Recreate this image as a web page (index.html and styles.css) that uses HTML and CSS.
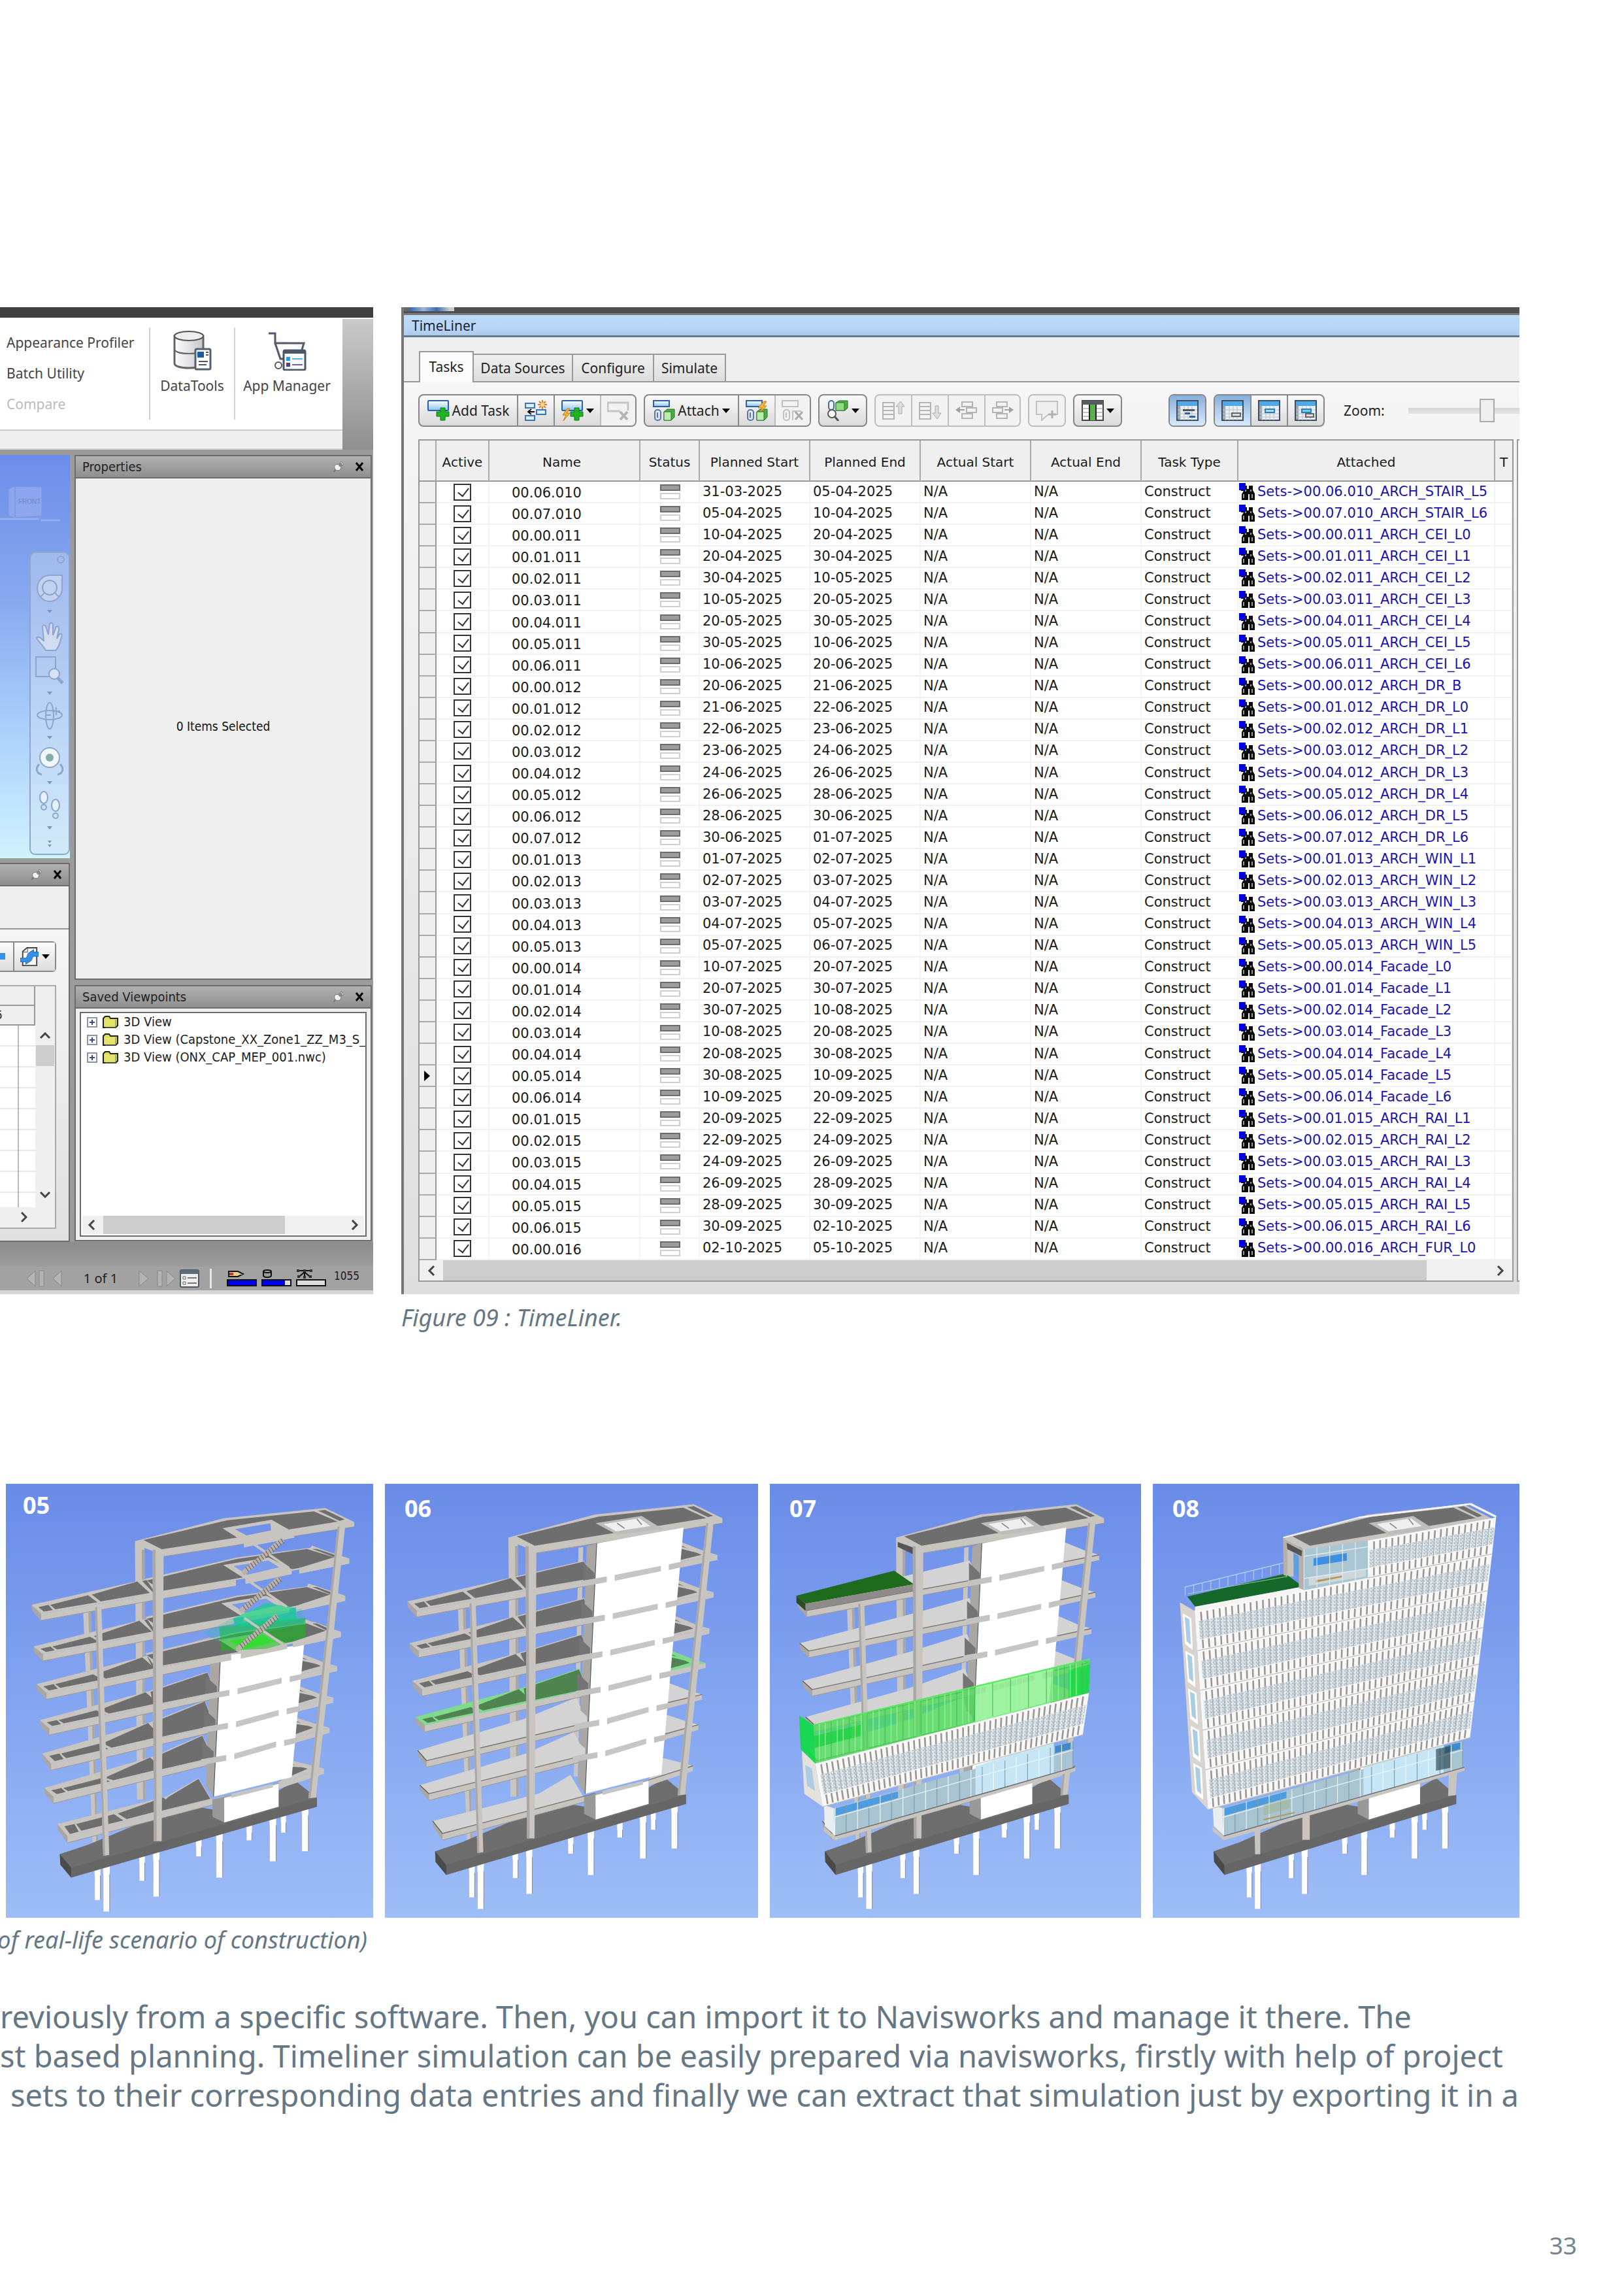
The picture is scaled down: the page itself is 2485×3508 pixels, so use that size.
FILE: index.html
```html
<!DOCTYPE html>
<html lang="en">
<head>
<meta charset="utf-8">
<title>TimeLiner</title>
<link rel="stylesheet" href="styles.css">
</head>
<body>
<svg class="defs" aria-hidden="true">
  <defs>
    <linearGradient id="sky" x1="0" y1="0" x2="0" y2="1"><stop offset="0" stop-color="#698be8"/><stop offset="1" stop-color="#a0c0f8"/></linearGradient>
    <linearGradient id="box" x1="0" y1="0" x2="0" y2="1"><stop offset="0" stop-color="#ffffff"/><stop offset="1" stop-color="#8ec2ee"/></linearGradient>
    <linearGradient id="drum" x1="0" y1="0" x2="1" y2="0"><stop offset="0" stop-color="#ffffff"/><stop offset="1" stop-color="#c4c6cc"/></linearGradient>
    <pattern id="speckle" width="14" height="12" patternUnits="userSpaceOnUse"><rect width="14" height="12" fill="#d6dfe4"/><path d="M1 1h3v3H1zM7 5h2v4H7zM11 0h2v3h-2zM3 8h3v2H3zM10 9h3v2h-3z" fill="#8296a2"/><path d="M5 2h3v2H5zM0 5h2v3H0zM11 5h2v3h-2z" fill="#fff"/></pattern>
    <symbol id="pin" viewBox="0 0 18 18"><path d="M1 17l6-6" stroke="#777" stroke-width="2"/><path d="M4 6a5 5 0 0 0 8 7l1-4 4-4-4-4-3 4z" fill="#f2f2f2" stroke="#777"/><circle cx="12" cy="6" r="3" fill="#888"/></symbol>
    <symbol id="close" viewBox="0 0 14 14"><path d="M2 1l10 12M12 1L2 13" stroke="#000" stroke-width="3"/></symbol>
    <symbol id="folder" viewBox="0 0 24 20"><path d="M1 18V4l3-3h6l2 3h11v11l-3 3z" fill="#dede5c" stroke="#222" stroke-width="2"/><path d="M3 6h17v10H3z" fill="#e3e46a"/><path d="M20 6v12H4" fill="none" stroke="#777" stroke-width="1"/></symbol>
    <symbol id="binoc" viewBox="0 0 24 26"><path d="M7 4h5v5h3V4h6v7l3 5v10h-8v-9h-2v9H4v-9l3-5z" fill="#0a0a0a"/><path d="M7 17v6M20 17v6M10 10v3M18 10v3" stroke="#999" stroke-width="2"/><path d="M0 0h10v11H0z" fill="#0000e8"/><path d="M3 11h5" stroke="#000" stroke-width="2"/></symbol>
    <symbol id="i-add" viewBox="0 0 34 32"><rect x="1" y="1" width="31" height="15" rx="1" fill="url(#box)" stroke="#2b5fa8" stroke-width="2"/><path d="M20 12h7v6h6v7h-6v6h-7v-6h-6v-7h6z" fill="#21b321" stroke="#0b7a12"/></symbol>
    <symbol id="i-insert" viewBox="0 0 34 32"><g fill="#d9f0fb" stroke="#3575b8" stroke-width="2"><rect x="1" y="5" width="14" height="7"/><rect x="18" y="15" width="14" height="7"/><rect x="1" y="24" width="14" height="7"/></g><path d="M27 0v14M20 7h14M22 2l10 10M32 2L22 12" stroke="#e37a28" stroke-width="2"/><circle cx="27" cy="7" r="3" fill="#f7dc8c"/><path d="M15 18H6M10 14l-5 4 5 4" stroke="#111" stroke-width="2" fill="none"/></symbol>
    <symbol id="i-auto" viewBox="0 0 34 32"><use href="#i-add"/><path d="M9 13L2 23h5l-4 9 10-12H8l5-7z" fill="#f8b533" stroke="#c57a16"/></symbol>
    <symbol id="i-del" viewBox="0 0 34 32"><path d="M20 17H1V4h31v12" fill="none" stroke="#c4c4c4" stroke-width="3"/><path d="M20 18l11 12M31 18L20 30" stroke="#b4b4b4" stroke-width="4"/></symbol>
    <symbol id="i-attach" viewBox="0 0 34 32"><rect x="1" y="1" width="24" height="9" fill="url(#box)" stroke="#2b5fa8" stroke-width="2"/><rect x="3" y="15" width="9" height="16" rx="4" fill="none" stroke="#5577aa" stroke-width="2"/><path d="M7 19v8" stroke="#5577aa" stroke-width="2"/><path d="M17 18l5-4h11v12l-5 5H17z" fill="#4cae3c" stroke="#28702a"/><path d="M17 18h11v13H17z" fill="#b8eeb0" stroke="#28702a"/></symbol>
    <symbol id="i-attachauto" viewBox="0 0 34 32"><use href="#i-attach"/><path d="M28 2l-9 10h6l-3 7 10-10h-5l5-7z" fill="#f8b533" stroke="#c57a16"/></symbol>
    <symbol id="i-detach" viewBox="0 0 34 32"><g fill="none" stroke="#c0c0c0" stroke-width="2"><rect x="1" y="1" width="24" height="9"/><rect x="3" y="15" width="9" height="16" rx="4"/><path d="M17 31V17h13M7 19v8"/></g><path d="M21 18l11 12M32 18L21 30" stroke="#aaa" stroke-width="3"/></symbol>
    <symbol id="i-find" viewBox="0 0 34 32"><rect x="3" y="1" width="8" height="14" rx="4" fill="none" stroke="#4a6a9a" stroke-width="2"/><path d="M14 4l5-3h13v11l-4 4H14z" fill="#4cae3c" stroke="#28702a"/><path d="M14 4h13v12H14z" fill="#8fdc80" stroke="#28702a"/><circle cx="8" cy="21" r="6" fill="#fff" stroke="#555" stroke-width="2"/><path d="M12 25l6 7" stroke="#555" stroke-width="3"/></symbol>
    <symbol id="i-up" viewBox="0 0 34 32"><path d="M1 4h17v25H1zM1 10h17M1 16h17M1 22h17" fill="none" stroke="#b4b4b4" stroke-width="2"/><path d="M25 21V10h-4l7-8 6 8h-4v11z" fill="#ddd" stroke="#aaa"/></symbol>
    <symbol id="i-down" viewBox="0 0 34 32"><path d="M1 4h17v25H1zM1 10h17M1 16h17M1 22h17" fill="none" stroke="#b4b4b4" stroke-width="2"/><path d="M25 9v11h-4l7 9 6-9h-4V9z" fill="#ddd" stroke="#aaa"/></symbol>
    <symbol id="i-out" viewBox="0 0 34 32"><g fill="none" stroke="#b4b4b4" stroke-width="2"><path d="M10 3h16v7H10zM17 12h15v7H17zM10 21h16v7H10z"/></g><path d="M0 15l7-5v10z" fill="#a2a2a2"/><path d="M6 15h8" stroke="#a2a2a2" stroke-width="2"/></symbol>
    <symbol id="i-in" viewBox="0 0 34 32"><g fill="none" stroke="#b4b4b4" stroke-width="2"><path d="M8 3h16v7H8zM2 12h15v7H2zM8 21h16v7H8z"/></g><path d="M34 15l-7-5v10z" fill="#a2a2a2"/><path d="M20 15h8" stroke="#a2a2a2" stroke-width="2"/></symbol>
    <symbol id="i-note" viewBox="0 0 34 32"><path d="M1 2h32v20H19L9 31v-9H1z" fill="#efefef" stroke="#c2c2c2" stroke-width="2"/><path d="M25 16v12M19 22h12" stroke="#b0b0b0" stroke-width="3"/></symbol>
    <symbol id="i-cols" viewBox="0 0 34 32"><rect x="1" y="1" width="32" height="30" fill="#fff" stroke="#444" stroke-width="2"/><path d="M1 1h32v6H1z" fill="#555b66"/><path d="M12 7h10v24H12z" fill="#57b544"/><path d="M1 13h32M1 19h32M1 25h32" stroke="#888"/><path d="M12 7v24M22 7v24" stroke="#222" stroke-width="2"/></symbol>
    <symbol id="i-view" viewBox="0 0 34 32"><rect x="1" y="1" width="32" height="30" fill="#e8eef3" stroke="#3e4d60" stroke-width="2"/><path d="M2 2h30v7H2z" fill="#4fa9e6"/><path d="M2 9h4v21H2z" fill="#9aa4ae"/><path d="M6 9v22M12 9v22M18 9v22M24 9v22M2 15h30M2 21h30M2 26h30" stroke="#b9c2ca"/></symbol>
    <symbol id="i-sync" viewBox="0 0 30 32"><path d="M4 30V7l7-6h16v29z" fill="#f7f7f7" stroke="#444" stroke-width="2"/><path d="M12 1v7H4" fill="none" stroke="#444"/><path d="M30 8h-8V4l-9 6-3 8H0v6h9v4l9-6 3-7h9z" fill="#3592e8" stroke="#1763b4"/></symbol>
  </defs>
</svg>
<main class="page">
  <section class="shots">
    <div class="app">
      <div class="app-top"></div>
      <div class="ribbon-row">
        <div class="ribbon">
          <div class="ribbon-tools">
            <div class="ribbon-list">
              <button>Appearance Profiler</button>
              <button>Batch Utility</button>
              <button disabled>Compare</button>
            </div>
            <button class="big-tool data">
              <svg width="60" height="62" viewBox="0 0 60 62"><path d="M3 9v42c0 4 9 7 22 7s22-3 22-7V9z" fill="url(#drum)" stroke="#666" stroke-width="3"/><ellipse cx="25" cy="9" rx="22" ry="7" fill="#eee" stroke="#555" stroke-width="2"/><path d="M3 30c4 8 40 8 44 0" fill="none" stroke="#666" stroke-width="2"/><rect x="35" y="29" width="23" height="31" rx="2" fill="#fff" stroke="#556070" stroke-width="3"/><path d="M38 33h10v9H38z" fill="#1c5aa8"/><path d="M51 34h4M51 38h4M40 48h14M40 53h12" stroke="#555" stroke-width="2"/></svg>
              DataTools
            </button>
            <button class="big-tool">
              <svg width="60" height="62" viewBox="0 0 60 62"><path d="M2 5h10v15h44l-3 10M12 20l8 24h8" fill="#f6f6f8" stroke="#55586a" stroke-width="3"/><circle cx="17" cy="54" r="5" fill="#fff" stroke="#555" stroke-width="2"/><rect x="25" y="31" width="33" height="30" rx="2" fill="#f7fafc" stroke="#4c566b" stroke-width="3"/><path d="M25 30h33v6H25z" fill="#4c566b"/><path d="M29 41h6v6h-6z" fill="#2a9be0"/><path d="M29 50h6v6h-6z" fill="#5a3d78"/><path d="M38 44h16" stroke="#4fb0e8" stroke-width="2"/><path d="M38 53h16" stroke="#7a5fa0" stroke-width="2"/></svg>
              App Manager
            </button>
          </div>
          <div class="ribbon-foot"></div>
        </div>
        <div class="ribbon-side"></div>
      </div>
      <div class="work">
        <div class="work-left">
          <div class="viewport">
            <svg class="viewport-art" viewBox="0 0 107 617" preserveAspectRatio="none">
              <g opacity=".6"><path d="M13 52l10-4 41 1v44l-42 3-9-3z" fill="#9bb2f0" stroke="#8098dc"/><path d="M23 48v47" stroke="#7088c8"/><path d="M0 98h60M62 100h30" stroke="#a8bdf2" stroke-width="3"/></g>
              <g fill="none" stroke="#8da4cc" stroke-width="2">
                <rect x="46" y="149" width="60" height="462" rx="8" fill="#d5e2f0" fill-opacity=".4"/>
                <circle cx="93" cy="160" r="5"/>
                <path d="M76 184h19v18a19 20 0 1 1-19-18z" fill="#c3d2f0"/><circle cx="76" cy="203" r="11"/><path d="M68 211l-6 6M84 211l6 6"/>
                <path d="M70 299c-4-8-12-14-14-19 3-4 9 2 11 5l-2-23c3-4 5 0 6 3l3 10 2-17c3-3 5 0 5 3v15l5-13c3-2 5 1 4 4l-3 14 4-7c4-2 4 2 3 5-3 8-3 15-9 20z" fill="#d0dcf0"/>
                <path d="M55 309h30v30H55z"/><circle cx="83" cy="335" r="8" fill="#d8e4f4"/><path d="M88 341l8 8" stroke-width="5"/>
                <ellipse cx="76" cy="399" rx="6" ry="20"/><ellipse cx="76" cy="398" rx="19" ry="7"/><path d="M86 386v12M80 392h12M70 398h8"/>
                <path d="M60 473c-6 6-5 14 4 16M92 473c6 6 5 14-4 16" stroke-width="3"/><circle cx="76" cy="463" r="15" fill="#eef6f8"/><circle cx="76" cy="463" r="6" fill="#88aaa8" stroke="none"/>
                <ellipse cx="67" cy="524" rx="6" ry="9" fill="#e4f2fa"/><circle cx="67" cy="539" r="4"/><ellipse cx="85" cy="536" rx="6" ry="9" fill="#e4f2fa"/><circle cx="85" cy="552" r="4"/>
              </g>
              <path d="M72 237h8l-4 5zM72 362h8l-4 5zM72 430h8l-4 5zM72 499h8l-4 5zM72 568h8l-4 5zM73 590h6l-3 4zM73 596h6l-3 4z" fill="#7f96bc"/>
              <text x="28" y="75" font-size="10" class="cube">FRONT</text>
            </svg>
          </div>
          <div class="dock">
            <div class="panel-head"><svg width="18" height="18"><use href="#pin"/></svg><svg width="14" height="14"><use href="#close"/></svg></div>
            <div class="dock-band"></div>
            <div class="dock-body">
              <div class="sync-group"><button class="cutoff" aria-label="Import"></button><button aria-label="Synchronise"><svg width="28" height="30"><use href="#i-sync"/></svg><i class="caret"></i></button></div>
              <div class="gantt">
                <div class="gantt-main"><div class="gantt-h1"></div><div class="gantt-h2">5</div><div class="gantt-rows"></div></div>
                <div class="vscroll"><svg width="16" height="10" viewBox="0 0 16 10"><path d="M1 9l7-7 7 7" fill="none" stroke="#444" stroke-width="3"/></svg><div class="vthumb"></div><svg class="down" width="16" height="10" viewBox="0 0 16 10"><path d="M1 1l7 7 7-7" fill="none" stroke="#444" stroke-width="3"/></svg></div>
                <div class="gantt-foot"><svg width="10" height="16" viewBox="0 0 10 16"><path d="M1 1l7 7-7 7" fill="none" stroke="#444" stroke-width="3"/></svg></div>
              </div>
            </div>
          </div>
        </div>
        <div class="work-right">
          <section class="panel props">
            <header class="panel-head"><h2>Properties</h2><svg width="18" height="18"><use href="#pin"/></svg><svg width="14" height="14"><use href="#close"/></svg></header>
            <p>0 Items Selected</p>
          </section>
          <section class="panel saved">
            <header class="panel-head"><h2>Saved Viewpoints</h2><svg width="18" height="18"><use href="#pin"/></svg><svg width="14" height="14"><use href="#close"/></svg></header>
            <div class="tree-box">
              <ul class="tree">
                <li><i class="plus"></i><svg width="24" height="20"><use href="#folder"/></svg>3D View</li>
                <li><i class="plus"></i><svg width="24" height="20"><use href="#folder"/></svg>3D View (Capstone_XX_Zone1_ZZ_M3_S_R</li>
                <li><i class="plus"></i><svg width="24" height="20"><use href="#folder"/></svg>3D View (ONX_CAP_MEP_001.nwc)</li>
              </ul>
              <div class="hscroll small"><svg width="12" height="16" viewBox="0 0 12 16"><path d="M10 1L3 8l7 7" fill="none" stroke="#444" stroke-width="3"/></svg><div class="hthumb"></div><svg width="12" height="16" viewBox="0 0 12 16"><path d="M2 1l7 7-7 7" fill="none" stroke="#444" stroke-width="3"/></svg></div>
            </div>
          </section>
        </div>
      </div>
      <footer class="status">
        <svg class="sheet-nav" width="56" height="26" viewBox="0 0 56 26"><path d="M14 1v24L1 13zM20 1h7v24h-7zM54 1v24L41 13z" fill="#b4b4b4" stroke="#868686"/></svg>
        <span class="sheet">1 of 1</span>
        <svg width="56" height="26" viewBox="0 0 56 26"><path d="M1 1v24l14-12zM29 1h7v24h-7zM43 1v24l13-12z" fill="#b4b4b4" stroke="#868686"/></svg>
        <svg class="sheet-list" width="30" height="28" viewBox="0 0 30 28"><rect x="1" y="1" width="28" height="26" rx="2" fill="#eee" stroke="#4f5963" stroke-width="2"/><path d="M1 1h28v6H1z" fill="#5b6a78"/><path d="M5 11h4v4H5zM5 19h4v4H5z" fill="none" stroke="#666"/><path d="M12 13h14M12 21h14" stroke="#777" stroke-width="2"/></svg>
        <i class="bar"></i>
        <svg class="meters" width="152" height="28" viewBox="0 0 152 28"><g stroke="#111" stroke-width="2"><rect x="1" y="16" width="44" height="9" fill="#0000f0"/><rect x="54" y="16" width="44" height="9" fill="#ddd"/><rect x="107" y="16" width="44" height="9" fill="#ddd"/></g><path d="M55 17h34v7H55z" fill="#0000f0"/><path d="M3 3h14l8 4-8 4H3z" fill="#e8d088" stroke="#111" stroke-width="2"/><path d="M4 5h6v4H4z" fill="#c33"/><path d="M56 3v7c2 3 10 3 12 0V3" fill="#999" stroke="#111" stroke-width="2"/><ellipse cx="62" cy="3" rx="6" ry="2" fill="#aaa" stroke="#111" stroke-width="2"/><path d="M109 2h20M119 2v9M119 4l-8 7M119 4l8 7" stroke="#111" stroke-width="2"/><path d="M107 0h4v4h-4zM117 0h4v4h-4zM127 0h4v4h-4zM108 9h4v4h-4zM117 10h4v4h-4zM126 9h4v4h-4z" fill="#333"/></svg>
        <span class="mem">1055</span>
      </footer>
      <div class="app-edge"></div>
    </div>

    <figure class="timeliner-fig">
      <div class="tl">
        <div class="tl-dark"><i></i></div>
        <h2 class="tl-title">TimeLiner</h2>
        <div class="tabs"><button class="on">Tasks</button><button>Data Sources</button><button>Configure</button><button>Simulate</button></div>
        <div class="tl-body">
          <div class="toolbar">
            <div class="group"><button class="w150"><svg width="34" height="32"><use href="#i-add"/></svg>Add Task</button><button aria-label="Insert"><svg width="34" height="32"><use href="#i-insert"/></svg></button><button class="w74" aria-label="Auto-add"><svg width="34" height="32"><use href="#i-auto"/></svg><i class="caret"></i></button><button class="off" aria-label="Delete"><svg width="34" height="32"><use href="#i-del"/></svg></button></div>
            <div class="group"><button class="w143"><svg width="34" height="32"><use href="#i-attach"/></svg>Attach<i class="caret"></i></button><button aria-label="Auto-attach"><svg width="34" height="32"><use href="#i-attachauto"/></svg></button><button class="off" aria-label="Clear attachment"><svg width="34" height="32"><use href="#i-detach"/></svg></button></div>
            <div class="group"><button class="w74" aria-label="Find items"><svg width="34" height="32"><use href="#i-find"/></svg><i class="caret"></i></button></div>
            <div class="group"><button class="off" aria-label="Move up"><svg width="34" height="32"><use href="#i-up"/></svg></button><button class="off" aria-label="Move down"><svg width="34" height="32"><use href="#i-down"/></svg></button><button class="off" aria-label="Outdent"><svg width="34" height="32"><use href="#i-out"/></svg></button><button class="off" aria-label="Indent"><svg width="34" height="32"><use href="#i-in"/></svg></button></div>
            <div class="group"><button class="off" aria-label="Add comment"><svg width="34" height="32"><use href="#i-note"/></svg></button></div>
            <div class="group"><button class="w74" aria-label="Columns"><svg width="34" height="32"><use href="#i-cols"/></svg><i class="caret"></i></button></div>
            <div class="group views"><button class="lit" aria-label="Gantt chart"><svg width="34" height="32" viewBox="0 0 34 32"><use href="#i-view"/><path d="M10 14h18v3H10z" fill="#555"/><path d="M13 19h8v3h-8zM20 24h9v3h-9z" fill="#2a62a8"/></svg></button></div>
            <div class="group"><button class="lit" aria-label="Planned dates"><svg width="34" height="32" viewBox="0 0 34 32"><use href="#i-view"/><path d="M16 20h13v5H16z" fill="#ddd" stroke="#666" stroke-width="2"/></svg></button><button aria-label="Actual dates"><svg width="34" height="32" viewBox="0 0 34 32"><use href="#i-view"/><path d="M11 14h14v5H11z" fill="#a4dcf4" stroke="#2f7db6" stroke-width="2"/></svg></button><button aria-label="Planned versus actual"><svg width="34" height="32" viewBox="0 0 34 32"><use href="#i-view"/><path d="M11 14h14v5H11z" fill="#7ac8f0" stroke="#2f7db6" stroke-width="2"/><path d="M17 21h12v5H17z" fill="#ddd" stroke="#666" stroke-width="2"/></svg></button></div>
            <label for="zoom">Zoom:</label><input id="zoom" type="range" min="0" max="100" value="74">
          </div>
          <div class="grid-row">
            <div class="grid-box">
              <table>
                <colgroup><col class="c-sel"><col class="c-act"><col class="c-name"><col class="c-stat"><col class="c-date"><col class="c-date"><col class="c-date"><col class="c-date"><col class="c-type"><col class="c-att"><col class="c-sel"></colgroup>
                <thead><tr><th></th><th>Active</th><th class="h-name">Name</th><th>Status</th><th>Planned Start</th><th>Planned End</th><th>Actual Start</th><th>Actual End</th><th>Task Type</th><th>Attached</th><th>T</th></tr></thead>
                <tbody id="tasks"></tbody>
              </table>
              <div class="hscroll"><svg width="12" height="16" viewBox="0 0 12 16"><path d="M10 1L3 8l7 7" fill="none" stroke="#444" stroke-width="3"/></svg><div class="hthumb"></div><svg width="12" height="16" viewBox="0 0 12 16"><path d="M2 1l7 7-7 7" fill="none" stroke="#444" stroke-width="3"/></svg></div>
            </div>
            <div class="next-pane"></div>
          </div>
        </div>
      </div>
      <figcaption>Figure 09 : TimeLiner.</figcaption>
    </figure>
  </section>

  <section class="stages">
    <figure class="stage first"><svg id="s5" viewBox="6 10 1457 1512" preserveAspectRatio="none"></svg><b>05</b></figure>
    <figure class="stage"><svg id="s6" viewBox="16 23 1517 1508" preserveAspectRatio="none"></svg><b>06</b></figure>
    <figure class="stage"><svg id="s7" viewBox="-10 23 1553 1508" preserveAspectRatio="none"></svg><b>07</b></figure>
    <figure class="stage"><svg id="s8" viewBox="-36 23 1542 1508" preserveAspectRatio="none"></svg><b>08</b></figure>
  </section>
  <div class="stage-caption"><span>of real-life scenario of construction)</span></div>

  <div class="copy">
    <p>reviously from a specific software. Then, you can import it to Navisworks and manage it there. The</p>
    <p>st based planning. Timeliner simulation can be easily prepared via navisworks, firstly with help of project</p>
    <p class="inset">sets to their corresponding data entries and finally we can extract that simulation just by exporting it in a</p>
  </div>
  <div class="folio">33</div>
</main>
<script src="script.js"></script>
</body>
</html>
```

FILE: styles.css
```css
* { box-sizing: border-box; }
body { margin: 0; background: #fff; overflow-x: hidden; font-family: "Noto Sans", sans-serif; }
button { font: inherit; color: inherit; background: none; border: 0; padding: 0; margin: 0; }
h2, p, ul, figure { margin: 0; padding: 0; font-weight: 400; }
svg { display: block; flex: none; }
i { display: block; flex: none; }
.defs { position: absolute; width: 0; height: 0; }
.page { padding-top: 470px; overflow: hidden; }
.shots { display: grid; grid-template-columns: 571fr 1711fr; gap: 43px; padding-right: 160px; }

/* Navisworks window */
.app { height: 1510px; display: flex; flex-direction: column; background: #9b9b99; overflow: hidden; min-width: 0; color: #1c1c1c; }
.app-top { height: 16px; background: #404040; }
.ribbon-row { display: flex; height: 202px; background: #fff; }
.ribbon { flex: 1; display: flex; flex-direction: column; }
.ribbon-side { width: 48px; margin-top: 2px; background: linear-gradient(#cacaca, #8f8f8f); }
.ribbon-tools { display: flex; flex: 1; padding: 15px 0; font-size: 21px; color: #444; }
.ribbon-list { width: 230px; flex: none; display: flex; flex-direction: column; align-items: flex-start; padding: 0 0 0 10px; border-right: 2px solid #d0d0d6; }
.ribbon-list button { line-height: 47px; height: 47px; white-space: nowrap; }
.ribbon-list button:disabled { color: #bbb; }
.big-tool { width: 130px; display: flex; flex-direction: column; align-items: center; gap: 8px; padding-top: 4px; white-space: nowrap; line-height: 30px; border-right: 2px solid #d0d0d6; }
.big-tool:last-child { width: 164px; border: 0; padding-right: 6px; }
.ribbon-foot { height: 33px; background: #efefef; border-top: 2px solid #ccc; border-bottom: 2px solid #d6d6d6; }
.work { display: flex; gap: 7px; padding: 8px 2px 0 0; height: 1212px; }
.work-left { width: 107px; display: flex; flex-direction: column; gap: 7px; }
.work-right { flex: 1; display: flex; flex-direction: column; gap: 8px; min-width: 0; }
.viewport { height: 617px; background: linear-gradient(#6b8de9, #87a8ee 35%, #a9ccfb 65%, #d0f2fe); }
.viewport-art { width: 100%; height: 100%; }
.cube { fill: #7488bb; font-family: "Liberation Sans", sans-serif; }
.panel { border: 2px solid #6c6c6c; background: #efefef; display: flex; flex-direction: column; font-family: "DejaVu Sans Condensed", "DejaVu Sans", sans-serif; }
.panel-head { height: 34px; flex: none; display: flex; align-items: center; gap: 16px; justify-content: flex-end; padding: 0 10px; background: linear-gradient(#b1b1b1, #8f8f8f); border-bottom: 2px solid #6c6c6c; }
.panel-head h2 { flex: 1; font-size: 20px; color: #222; line-height: 30px; }
.props { height: 803px; }
.props p { margin: auto; font-size: 19px; padding-bottom: 8px; color: #111; }
.saved { height: 392px; }
.tree-box { flex: 1; margin: 5px 6px; border: 2px solid #6a6a6a; background: #fff; display: flex; flex-direction: column; overflow: hidden; min-width: 0; }
.tree { flex: 1; list-style: none; font-size: 20px; line-height: 27px; padding: 0 0 0 9px; white-space: nowrap; }
.tree li { display: flex; align-items: center; gap: 8px; height: 27px; }
.plus { width: 16px; height: 16px; border: 2px solid #8a93a8; background: linear-gradient(#3a4a80, #3a4a80) center / 8px 2px no-repeat, linear-gradient(#3a4a80, #3a4a80) center / 2px 8px no-repeat; }
.hscroll { display: flex; align-items: center; gap: 12px; height: 31px; background: #f0f0f0; padding: 0 12px; }
.hscroll .hthumb { align-self: stretch; background: #ccc; width: 1505px; margin-right: auto; }
.hscroll.small { margin: 0 2px 2px; height: 28px; padding: 0 8px; }
.hscroll.small .hthumb { width: 278px; }
.dock { height: 580px; background: #f3f3f3; border: 2px solid #6c6c6c; border-left: 0; display: flex; flex-direction: column; }
.dock-band { height: 66px; background: #efefef; border-bottom: 2px solid #999; flex: none; }
.dock-body { flex: 1; padding: 18px 19px 0 0; background: linear-gradient(#f6f6f6, #e0e0e0); }
.sync-group { display: flex; height: 47px; border: 2px solid #888; border-left: 0; border-radius: 0 6px 6px 0; }
.sync-group button { flex: 1; display: flex; align-items: center; justify-content: center; gap: 5px; border-left: 2px solid #888; background: linear-gradient(#fdfdfd, #dcdcdc); }
.sync-group .cutoff { flex: none; width: 20px; border: 0; background: linear-gradient(#3592e8, #3592e8) 0 16px / 8px 10px no-repeat, linear-gradient(#fdfdfd, #dcdcdc); }
.caret { width: 0; height: 0; border: 6px solid transparent; border-top: 7px solid #000; border-bottom: 0; }
.gantt { margin-top: 20px; height: 373px; display: grid; grid-template-columns: 1fr 30px; grid-template-rows: 1fr 31px; border: 2px solid #aaa; border-left: 0; background: #efefef; }
.gantt-main { background: #fff; display: flex; flex-direction: column; }
.gantt-h1, .gantt-h2 { height: 30px; background: #efefef; border-bottom: 2px solid #999; border-right: 2px solid #999; }
.gantt-h2 { font: 17px/28px "DejaVu Sans Condensed", sans-serif; text-indent: -6px; overflow: hidden; }
.gantt-rows { flex: 1; background: linear-gradient(90deg, transparent 27px, #bbb 27px, #bbb 29px, transparent 29px), repeating-linear-gradient(#fff 0 30px, #e6e6e6 30px 32px); }
.vscroll { display: flex; flex-direction: column; align-items: center; padding: 70px 0 14px; }
.vthumb { width: 28px; height: 32px; margin-top: 10px; background: #ccc; }
.down { margin-top: auto; }
.gantt-foot { grid-column: 1 / 3; padding: 7px 0 0 32px; }
.status { height: 74px; display: flex; align-items: center; padding: 38px 0 0 40px; background: linear-gradient(#8c8c8c, #9d9d9d 38px, #a2a2a2 38px); flex: none; }
.sheet { font-size: 20px; width: 116px; text-align: center; line-height: 28px; color: #222; }
.sheet-list { margin-left: 7px; }
.bar { width: 3px; height: 30px; background: #e6e6e6; margin: 0 23px 0 16px; }
.mem { font: 17px/26px "DejaVu Sans Condensed", sans-serif; margin: -8px 0 0 12px; }
.app-edge { flex: 1; background: #d6d6d6; }

/* TimeLiner window */
.timeliner-fig { min-width: 0; }
.tl { height: 1510px; display: flex; flex-direction: column; background: #efefef; border-left: 4px solid #777; overflow: hidden; }
.tl-dark { height: 12px; flex: none; background: #4f5052; border-bottom: 3px solid #77797c; }
.tl-dark i { width: 77px; height: 6px; background: linear-gradient(90deg, #666 8px, #3c6cb4 10px, #9db4d8 30px, #3c6cb4 50px, #ccc 70px); }
.tl-title { height: 34px; flex: none; background: linear-gradient(#bbd9f8, #b9d6f6 60%, #aecbee); border-bottom: 3px solid #68788c; font-size: 21px; line-height: 32px; padding-left: 12px; color: #1a2430; }
.tabs { height: 69px; flex: none; padding: 21px 0 0 23px; display: flex; align-items: flex-end; border-bottom: 2px solid #999; color: #222; }
.tabs button { height: 42px; border: 2px solid #999; border-left-width: 0; border-bottom: 0; background: linear-gradient(#efefef, #dedede); width: 110px; white-space: nowrap; font-size: 21px; line-height: 40px; }
.tabs button:nth-child(2) { width: 152px; }
.tabs button:nth-child(3) { width: 124px; }
.tabs .on { width: 84px; height: 50px; border-left-width: 2px; background: #fcfcfc; margin-bottom: -4px; padding-bottom: 4px; }
.tl-body { flex: 1; padding: 18px 0 0 22px; background: linear-gradient(#f6f6f6, #dedede); display: flex; flex-direction: column; }
.toolbar { display: flex; align-items: center; gap: 11px; font-size: 21px; color: #222; height: 50px; }
.group { display: flex; height: 50px; border: 2px solid #868686; border-radius: 8px; overflow: hidden; background: linear-gradient(#fafafa, #dadada); flex: none; }
.group:has(.off:first-child) { border-color: #bcbcbc; background: #f2f2f2; }
.group button { width: 56px; display: flex; align-items: center; justify-content: center; gap: 4px; border-left: 2px solid #8a8a8a; white-space: nowrap; }
.group button:first-child { border-left: 0; width: 54px; }
.group .off { background: #f2f2f2; border-color: #bcbcbc; }
.group .off:last-child { width: 54px; }
.group .w150, .group .w150:first-child { width: 149px; }
.group .w143, .group .w143:first-child { width: 142px; }
.group .w74, .group .w74:first-child { width: 71px; }
.group .lit { background: linear-gradient(#86aede, #d8eafc); }
.views { margin-left: 60px; }
.toolbar label { margin-left: 18px; width: 88px; }
#zoom { appearance: none; flex: 1; min-width: 0; margin: 0; height: 36px; background: linear-gradient(#d6d6d6, #e4e4e4) 0 14px / 100% 9px no-repeat; }
#zoom::-webkit-slider-thumb { appearance: none; width: 23px; height: 36px; border: 2px solid #aaa; background: #eee; }
.grid-row { display: flex; gap: 5px; margin-top: 19px; }
.grid-box { flex: 1; border: 2px solid #999; min-width: 0; }
.next-pane { width: 4px; height: 1289px; border: 2px solid #999; border-right: 0; background: #fff; }
table { width: 100%; height: 1254px; table-layout: fixed; border-collapse: separate; border-spacing: 0; background: #fff; font: 21px "DejaVu Sans", sans-serif; color: #1a1a1a; }
.c-sel { width: 26px; } .c-act { width: 81px; } .c-name { width: 231px; } .c-stat { width: 91px; }
.c-date { width: 169px; } .c-type { width: 148px; }
th { height: 63px; padding: 4px 0 0; background: #efefef; border-right: 2px solid #aaa; border-bottom: 2px solid #999; font-size: 20px; font-weight: 400; white-space: nowrap; overflow: hidden; }
th:last-child { border-right: 0; }
.h-name { padding-right: 8px; }
td { padding: 0 0 1px 4px; height: 33px; line-height: 27px; border-right: 2px solid #f4f4f4; border-bottom: 2px solid #f1f1f1; white-space: nowrap; overflow: hidden; }
td:first-child { background: #efefef; border-right: 2px solid #999; border-bottom: 2px solid #aaa; padding: 0 0 0 7px; }
td:nth-child(2) { padding: 0 0 0 26px; }
td:nth-child(3) { padding: 4px 0 0 34px; }
td:nth-child(4) { padding: 0 0 0 30px; }
td:nth-child(10) { padding: 0 0 1px 1px; }
td input { appearance: none; display: block; width: 27px; height: 26px; margin: 0; border: 2px solid #333; background: #fff; }
td input:checked::before { content: ""; display: block; width: 8px; height: 14px; margin: 1px 0 0 8px; border: solid #333; border-width: 0 2px 2px 0; rotate: 38deg; }
.planned, .actual { width: 31px; height: 10px; border: 2px solid #6c6c6c; background: #9c9c9c; }
.actual { margin-top: 3px; border-color: #cfcfcf; background: #fff; }
.marker { width: 0; height: 0; border: 8px solid transparent; border-left: 9px solid #000; border-right: 0; }
td a { display: flex; align-items: center; gap: 4px; color: #1a12b0; text-decoration: none; }
figcaption { margin-top: 12px; }
figcaption, .stage-caption { font-style: italic; font-size: 36px; line-height: 48px; color: #657685; white-space: nowrap; }

/* construction stages */
.stages { display: grid; grid-template-columns: 562fr 571fr 568fr 561fr; gap: 18px; margin-top: 230px; padding: 0 160px 0 9px; }
.stage { position: relative; height: 664px; }
.stage svg { width: 100%; height: 100%; }
.stage b { position: absolute; left: 30px; top: 14px; font-size: 36px; line-height: 48px; color: #fff; }
.first b { left: 26px; top: 9px; }
.stage-caption { width: 562px; display: flex; justify-content: flex-end; margin-top: 10px; }
.copy { margin-top: 63px; font-size: 47px; line-height: 60px; color: #657685; white-space: nowrap; }
.copy .inset { padding-left: 16px; }
.folio { margin: 175px 72px 38px 0; text-align: right; font-size: 37px; line-height: 50px; color: #748391; }
```

FILE: script.js
```js
/* ---- task table ---- */
const tasks = `00.06.010 31-03 05-04 ARCH_STAIR_L5
00.07.010 05-04 10-04 ARCH_STAIR_L6
00.00.011 10-04 20-04 ARCH_CEI_L0
00.01.011 20-04 30-04 ARCH_CEI_L1
00.02.011 30-04 10-05 ARCH_CEI_L2
00.03.011 10-05 20-05 ARCH_CEI_L3
00.04.011 20-05 30-05 ARCH_CEI_L4
00.05.011 30-05 10-06 ARCH_CEI_L5
00.06.011 10-06 20-06 ARCH_CEI_L6
00.00.012 20-06 21-06 ARCH_DR_B
00.01.012 21-06 22-06 ARCH_DR_L0
00.02.012 22-06 23-06 ARCH_DR_L1
00.03.012 23-06 24-06 ARCH_DR_L2
00.04.012 24-06 26-06 ARCH_DR_L3
00.05.012 26-06 28-06 ARCH_DR_L4
00.06.012 28-06 30-06 ARCH_DR_L5
00.07.012 30-06 01-07 ARCH_DR_L6
00.01.013 01-07 02-07 ARCH_WIN_L1
00.02.013 02-07 03-07 ARCH_WIN_L2
00.03.013 03-07 04-07 ARCH_WIN_L3
00.04.013 04-07 05-07 ARCH_WIN_L4
00.05.013 05-07 06-07 ARCH_WIN_L5
00.00.014 10-07 20-07 Facade_L0
00.01.014 20-07 30-07 Facade_L1
00.02.014 30-07 10-08 Facade_L2
00.03.014 10-08 20-08 Facade_L3
00.04.014 20-08 30-08 Facade_L4
00.05.014 30-08 10-09 Facade_L5
00.06.014 10-09 20-09 Facade_L6
00.01.015 20-09 22-09 ARCH_RAI_L1
00.02.015 22-09 24-09 ARCH_RAI_L2
00.03.015 24-09 26-09 ARCH_RAI_L3
00.04.015 26-09 28-09 ARCH_RAI_L4
00.05.015 28-09 30-09 ARCH_RAI_L5
00.06.015 30-09 02-10 ARCH_RAI_L6
00.00.016 02-10 05-10 ARCH_FUR_L0`.split('\n').map(l => l.split(' '));
const current = '00.05.014';
document.getElementById('tasks').innerHTML = tasks.map(([name, start, end, set]) => `<tr>
<td>${name === current ? '<i class="marker"></i>' : ''}</td>
<td><input type="checkbox" checked aria-label="${name} active"></td>
<td>${name}</td><td><i class="planned"></i><i class="actual"></i></td>
<td>${start}-2025</td><td>${end}-2025</td><td>N/A</td><td>N/A</td><td>Construct</td>
<td><a href="#"><svg width="24" height="26"><use href="#binoc"/></svg>Sets-&gt;${name}_${set}</a></td><td></td></tr>`).join('');

/* ---- building model ---- */
const P = (pts, fill, extra = '') => `<polygon points="${pts}" fill="${fill}" ${extra}/>`;
const L = (x1, y1, x2, y2, c, w = 2) => `<line x1="${x1}" y1="${y1}" x2="${x2}" y2="${y2}" stroke="${c}" stroke-width="${w}"/>`;
const BEAM = '#c8c4c0', SHADE = '#aaa6a3', DARK = '#6e6e6e', PALE = '#d3d3d3', EDGE = '#8f8c88';
/* floors: tip x/y, front corner x/y, beam end at the core, back corner at the core, right beam */
const floors = [
  [107,432,145,463,918,345,825,290,1170,303,1368,270],
  [115,577,153,604,910,478,825,420,1157,435,1352,400],
  [127,708,167,738,900,605,815,545,1145,560,1335,526],
  [140,833,178,862,893,728,805,665,1132,681,1320,645],
  [150,950,185,985,887,843,795,765,1120,793,1305,755],
  [158,1070,195,1100,880,955,785,885,1110,903,1290,860],
  [210,1195,250,1238,872,1098,770,1035,1088,1052,1268,1003]
];
function base() {
  let s = '';
  for (const [x, a, b, w] of [[358,1345,1460,23],[392,1340,1500,26],[535,1300,1393,22],[590,1290,1448,25],[760,1245,1308,22],[840,1225,1382,26],[960,1195,1252,22],[1052,1170,1325,26],[1097,1160,1225,20],[1180,1135,1290,26]])
    s += `<rect x="${x}" y="${a}" width="${w}" height="${b - a}" fill="#fff"/>` + L(x + w, a + 30, x + w, b, '#8a8f9c', 3) + L(x, a + 30, x, b, '#a8b0c0', 2);
  s += P('220,1300 330,1268 545,1190 780,1138 865,1150 1085,1080 1155,1045 1240,1105 1240,1135 265,1380 222,1337', DARK);
  s += P('265,1347 1240,1103 1240,1135 265,1382', '#666') + P('220,1300 265,1347 265,1382 222,1337', '#4a4a4a');
  return s;
}
function backCols(top) {
  return P('518,215 556,215 560,1110 526,1110', BEAM) + P('545,240 556,240 560,1110 550,1110', SHADE)
    + P('313,460 343,455 372,1260 350,1265', BEAM) + P('333,458 343,456 372,1260 364,1262', SHADE)
    + (top ? P('803,245 822,243 800,1040 784,1040', BEAM) : '');
}
function floor(f, i, fill, rim) {
  const [tx, ty, cx, cy, ex, ey, bx, by, rx, ry, qx, qy] = f;
  const pale = fill === PALE;
  const m = (ty + (by - ty) * .58) - 3, sl = (ey - cy) / (ex - cx), y = x => cy + sl * (x - cx);
  let s = P(`${tx},${ty} ${tx + 433},${m} ${bx},${by} ${ex - 50},${y(ex - 50)} ${cx},${cy}`, pale ? PALE : rim || BEAM);
  if (!pale) {
    s += P(`${tx + 75},${ty} ${tx + 225},${ty - 34} ${tx + 262},${y(tx + 255) - 7} ${tx + 95},${y(tx + 95) - 7}`, fill);
    s += P(`${tx + 28},${ty + 8} ${tx + 68},${ty} ${tx + 85},${y(tx + 85) - 6} ${tx + 50},${y(tx + 50) - 6}`, fill);
    s += P(`${tx + 240},${ty - 36} ${tx + 420},${m + 4} ${tx + 470},${y(tx + 470) - 7} ${tx + 275},${y(tx + 275) - 7}`, fill);
    s += P(`${tx + 440},${m + 2} ${bx},${by + 3} ${ex - 55},${y(ex - 55) - 3} 600,${y(600) - 5} 590,${y(590) - 6}`, fill);
  }
  s += P(`${rx},${ry} ${rx + 50},${ry - 78} ${qx - 50},${qy - 12} ${qx},${qy}`, pale ? PALE : rim || BEAM);
  if (!pale) s += P(`${rx},${ry - 6} ${rx + 50},${ry - 66} ${qx - 65},${qy}`, fill) + L(rx + 40, ry - 60, qx - 70, qy - 8, rim || BEAM, 7);
  s += P(`${cx},${cy} ${ex},${ey} ${ex},${ey + 20} ${cx},${cy + 24}`, BEAM);
  s += P(`${tx},${ty} ${cx},${cy} ${cx},${cy + 24} ${tx + 2},${ty + 20}`, SHADE);
  s += L(cx, cy + 23, ex, ey + 20, EDGE, 2);
  s += P(`${rx},${ry} ${qx},${qy} ${qx},${qy + 18} ${rx},${ry + 20}`, BEAM);
  if (i === 6) s += P(`${ex},${ey} ${rx},${ry} ${rx},${ry + 18} ${ex},${ey + 20}`, SHADE);
  if (pale) s += L(cx, cy, ex, ey, '#76706a', 3) + L(tx, ty, cx, cy, '#5a5650', 3) + L(rx, ry, qx, qy, '#76706a', 3);
  return s;
}
function frontCols() {
  return P('588,240 632,240 624,1255 593,1255', BEAM) + P('588,240 600,240 604,1255 593,1255', SHADE)
    + P('360,440 385,436 416,1303 392,1306', BEAM) + P('360,440 368,438 400,1305 392,1306', SHADE)
    + P('1322,160 1352,158 1236,1103 1206,1106', BEAM) + P('1322,160 1330,160 1215,1105 1206,1106', SHADE);
}
function roof(open) {
  let s = P('518,210 870,130 1272,94 1388,143 1388,160 605,268 590,245 520,222', BEAM)
    + P('552,206 885,137 1228,106 1322,142 1180,162 625,238', DARK)
    + P('1245,104 1272,101 1350,134 1330,139', DARK) + L(605, 267, 1388, 160, EDGE, 2);
  return s + (open ? P('865,165 1060,135 1150,180 1150,198 950,232 950,212', BEAM) + P('915,168 1055,148 1058,172 960,190', '#7091ea')
    : P('872,160 1060,135 1145,180 960,200', '#bdbdbd') + P('905,163 1050,143 1095,170 955,188', '#eee') + L(960, 160, 990, 178, '#888', 4) + L(1040, 145, 1060, 165, '#888', 4));
}
function core(topLeft, topRight, first) {
  const x = y => 877 - (y - 230) * .052, r = y => 1230 - (y - 175) * .104;
  let s = P(`${x(topLeft) - 40},${topLeft + 10} ${x(topLeft)},${topLeft} 830,1100 800,1060`, SHADE);
  floors.forEach(([, , , , ex, ey], i) => {
    /* the decks and their beams run in front of the shaded core wall */
    if (i >= first && i < 6) s += P(`${ex - 95},${ey - 48} ${ex - 50},${ey - 12} ${ex - 50},${ey + 8} ${ex - 95},${ey + 14}`, first === 0 && i > 3 ? PALE : '#747474');
  });
  s += P(`${x(topLeft)},${topLeft} ${r(topRight)},${topRight} 1140,1032 830,1100`, '#fff') + L(x(topLeft), topLeft, 830, 1100, '#555', 3);
  s += P('872,1105 1088,1055 1088,1135 872,1190', '#fff') + P('825,1110 872,1100 872,1190 826,1170', '#999');
  floors.forEach(([, , , , ex, ey, , , rx, ry], i) => {
    if (i < first || i === 6) return;
    s += P(`${ex - 100},${ey + 15} ${ex},${ey} ${ex},${ey + 20} ${ex - 100},${ey + 35}`, '#c5c3c1');
    s += P(`${ex + 32},${ey - 5} ${rx - 32},${ry + 5} ${rx - 32},${ry + 24} ${ex + 32},${ey + 15}`, '#c6c6c6');
    s += P(`${rx},${ry} ${rx + 50},${ry - 9} ${rx + 50},${ry + 10} ${rx},${ry + 20}`, '#c5c3c1');
  });
  return s + P('900,1090 1065,1055 1065,1068 900,1104', '#c6c6c6');
}
function glass(x0, x1) {
  let s = P(`${x0},1140 ${x0 + 42},1150 ${x0 + 46},1245 ${x0 + 4},1212`, '#e8eef0')
    + P(`${x0 + 42},1150 ${x1},918 ${x1},1010 ${x0 + 46},1245`, '#a8c4d0') + P(`${x0 + 50},1150 ${x0 + 310},1092 ${x0 + 310},1115 ${x0 + 50},1176`, '#4e9be0')
    + P(`850,1005 ${x1 - 80},915 ${x1 - 80},1030 850,1105`, '#c6e6f6');
  s += P(`${x1 - 75},935 ${x1 - 10},922 ${x1 - 10},945 ${x1 - 75},960`, '#3f89cc');
  for (let i = 0; i <= 21; i++) { const x = x0 + 46 + i * (x1 - x0 - 46) / 21, y = 1150 - i * 232 / 21; s += L(x, y, x, y + 94, i % 2 ? '#7f9aa8' : '#f0f8fc', 3); }
  s += L(x0 + 42, 1182, x1, 948, '#e8f4fa', 3) + P(`${x0},1215 ${x0 + 46},1247 ${x1 + 8},1008 ${x1 + 8},1020 ${x0 + 46},1262 ${x0},1230`, BEAM) + L(x0 + 46, 1247, x1 + 8, 1008, '#666', 3);
  return s;
}
/* tiled façade on a quad given as TL, TR, BR, BL */
function facade(q, rows, cols) {
  const at = (u, v) => { const [a, b, c, d] = q; return [0, 1].map(k => ((1 - u) * (1 - v) * a[k] + u * (1 - v) * b[k] + u * v * c[k] + (1 - u) * v * d[k]).toFixed(1)); };
  let s = P(q.join(' '), '#f8f8f8');
  for (let r = 0; r < rows; r++) {
    const v = f => (r + f) / rows;
    s += P([at(.012, v(.27)), at(.995, v(.27)), at(.995, v(.73)), at(.012, v(.73))].join(' '), 'url(#speckle)');
    for (let i = 1; i < cols; i++) {
      const u = i / cols;
      for (const [a, b] of [[.05, .27], [.75, .97]]) s += L(...at(u, v(a)), ...at(u, v(b)), '#9b9590', 7);
      s += L(...at(u, v(.27)), ...at(u, v(.73)), '#a0aab2', 3) + L(...at(u + .008, v(.27)), ...at(u + .008, v(.73)), '#f0f3f4', 3);
    }
    s += L(...at(0, v(1)), ...at(1, v(1)), '#c6c1bc', 3);
  }
  return s;
}
const sky = '<rect x="-50" width="1700" height="1600" fill="url(#sky)"/>';
const put = (id, s) => document.getElementById(id).innerHTML = sky + s;
const build = (tint) => floors.map((f, i) => [f, i, ...tint(i)]).reverse().map(a => floor(...a)).join('');

function stairs() {
  let s = '';
  for (const [x, y] of [[945,204],[935,338],[922,470]]) {
    s += L(x + 30, y + 8, x + 185, y + 100, BEAM, 9) + L(x + 160, y, x, y + 118, '#b9b3ab', 18);
    for (let i = 0; i < 15; i++) s += L(x + 152 - i * 10, y - 2 + i * 7, x + 164 - i * 10, y + 14 + i * 7, '#6a665e', 3);
  }
  return s;
}
function wideFloors() {
  /* upper decks stay open across the core while the stairs are going in */
  return [0, 1, 2].reverse().map(i => {
    const [, , , , ex, ey, , , rx, ry, qx, qy] = floors[i];
    return P(`560,${ey - 4} 922,${ey - 78} 1230,${ey - 114} ${qx},${qy} ${rx},${ry + 6} ${ex},${ey} 600,${ey + 46}`, BEAM)
      + P(`565,${ey + 2} 922,${ey - 73} 1200,${ey - 108} ${qx - 60},${qy - 4} ${rx},${ry} ${ex - 10},${ey - 3} 625,${ey + 38}`, DARK)
      + P(`1222,${ey - 108} 1240,${ey - 108} ${qx - 30},${qy - 4} ${qx - 50},${qy - 2}`, DARK)
      + P(`600,${ey + 46} ${ex},${ey} ${ex},${ey + 20} 600,${ey + 66}`, BEAM)
      + P(`${rx},${ry} ${qx},${qy} ${qx},${qy + 18} ${rx},${ry + 20}`, BEAM)
      + P(`${ex - 50},${ey - 52} ${ex + 130},${ey - 78} ${ex + 222},${ey - 38} ${ex + 222},${ey - 20} ${ex + 38},${ey + 14} ${ex + 38},${ey - 3}`, BEAM)
      + P(`${ex - 8},${ey - 48} ${ex + 128},${ey - 68} ${ex + 172},${ey - 44} ${ex + 45},${ey - 18}`, i === 2 ? '#6bf060' : '#7d9bec');
  }).join('');
}
put('s5', backCols() + base() + build(() => [DARK]) + core(610, 570, 3) + wideFloors() + roof(true)
  + P('852,510 1010,490 1195,478 1195,545 1040,585 860,592', '#00c808', 'opacity=".5"') + P('905,480 1040,425 1155,442 1160,485 925,510', '#00dc78', 'opacity=".6"') + P('790,530 900,480 1180,445 1195,500 850,560', '#1bbf9a', 'opacity=".25"')
  + stairs() + frontCols());

put('s6', backCols(true) + base() + build(i => i < 3 ? [DARK] : i === 3 ? ['#4f8350', '#7edb8c'] : [PALE]) + roof(false) + core(230, 175, 0) + frontCols());

const curtain = (() => {
  let s = P('113,828 172,862 1330,632 1325,750 180,995 119,945', '#3ee04e', 'opacity=".72"') + P('113,828 172,862 180,995 119,945', '#0bd84a', 'opacity=".8"')
    + P('172,900 370,860 370,900 178,940', '#00d820', 'opacity=".5"') + P('850,728 1170,665 1160,780 850,850', '#d0ffc8', 'opacity=".45"') + P('1240,670 1330,650 1325,750 1240,765', '#00dc30', 'opacity=".6"');
  for (let i = 1; i < 46; i++) { const x = 172 + i * 25; s += L(x, 862 - i * 4.97, x, 990 - i * 5.3, i % 3 ? '#a6f2a0' : '#4cb858', 3); }
  return s + L(172, 862, 1330, 632, '#58e860', 5);
})();
put('s7', backCols(true) + base() + build(() => [PALE]) + roof(false) + P('525,225 590,245 590,268 525,242', '#555') + core(230, 175, 0)
  + P('101,412 510,325 593,372 139,440', '#1f6b1d') + P('139,440 593,372 593,394 139,464', '#8f8b8b') + P('101,412 139,440 139,464 101,436', '#2d4a2a')
  + frontCols() + curtain
  + glass(216, 1258) + P('124,950 180,995 211,1145 134,1100', '#e4e0dc') + P('138,1000 166,1012 178,1090 146,1072', '#a9cbe4')
  + facade([[180, 995], [1325, 750], [1299, 895], [211, 1145]], 1, 50));

let rail = '';
for (let i = 0; i < 12; i++) rail += L(100 + i * 36, 380 - i * 7, 100 + i * 36, 412 - i * 7, '#cfe2fa', 2);
let side = P('78,435 140,465 196,1155 129,1095', '#d9d4d0');
for (let i = 0; i < 5; i++) { const x = 90 + i * 11, y = 482 + i * 130; side += P(`${x},${y - 8} ${x + 36},${y + 8} ${x + 42},${y + 118} ${x + 10},${y + 98}`, '#fff') + P(`${x + 8},${y + 2} ${x + 28},${y + 12} ${x + 34},${y + 100} ${x + 16},${y + 88}`, '#a9cde2'); }
let attic = P('600,250 869,220 869,350 600,392', '#a9c6d2') + P('640,282 780,264 780,290 640,308', '#3e8fe4') + P('620,350 860,318 860,345 620,378', '#ccd8da') + P('650,358 760,342 760,348 650,366', '#b59a60');
for (let i = 0; i <= 5; i++) attic += L(600 + i * 54, 250 - i * 6, 600 + i * 54, 390 - i * 8, '#e2f0f6', 3);
attic += L(600, 275, 869, 242, '#e2f0f6', 3) + L(600, 352, 869, 318, '#e2f0f6', 3);
put('s8', base() + core(900, 860, 6) + P('518,215 556,215 556,345 526,345', BEAM) + P('555,270 600,280 600,350 560,335', '#5f9fe0') + roof(false)
  + P('109,415 522,335 595,380 142,450', '#14692a') + rail + L(98, 382, 512, 298, '#bcd4f8', 3) + L(112, 405, 530, 345, '#b8dcb8', 2)
  + P('142,450 595,380 600,395 140,468', '#f4f4f4') + P('512,212 600,252 600,392 578,385 578,275 530,248 530,345 514,340', '#b7b0aa') + P('527,228 592,256 590,275 530,250', '#555') + attic
  + P('593,1150 624,1150 624,1260 593,1260', BEAM) + P('392,1220 416,1215 416,1310 394,1310', BEAM) + P('1210,1010 1245,1005 1238,1105 1206,1108', BEAM)
  + glass(216, 1267) + P('1155,945 1215,935 1215,1010 1155,1020', '#29424e', 'opacity=".65"') + P('430,1140 540,1115 540,1150 430,1175', '#9fb48a', 'opacity=".5"') + L(430, 1190, 560, 1165, '#b59a60', 5)
  + side + facade([[140, 465], [1391, 267], [1298, 905], [196, 1155]], 5, 48)
  + facade([[869, 220], [1408, 140], [1391, 267], [869, 350]], 1, 21) + L(512, 210, 830, 140, '#f0f0f0', 5) + L(830, 140, 1300, 93, '#f4f4f4', 6) + L(1300, 93, 1408, 138, '#f4f4f4', 8));
```
